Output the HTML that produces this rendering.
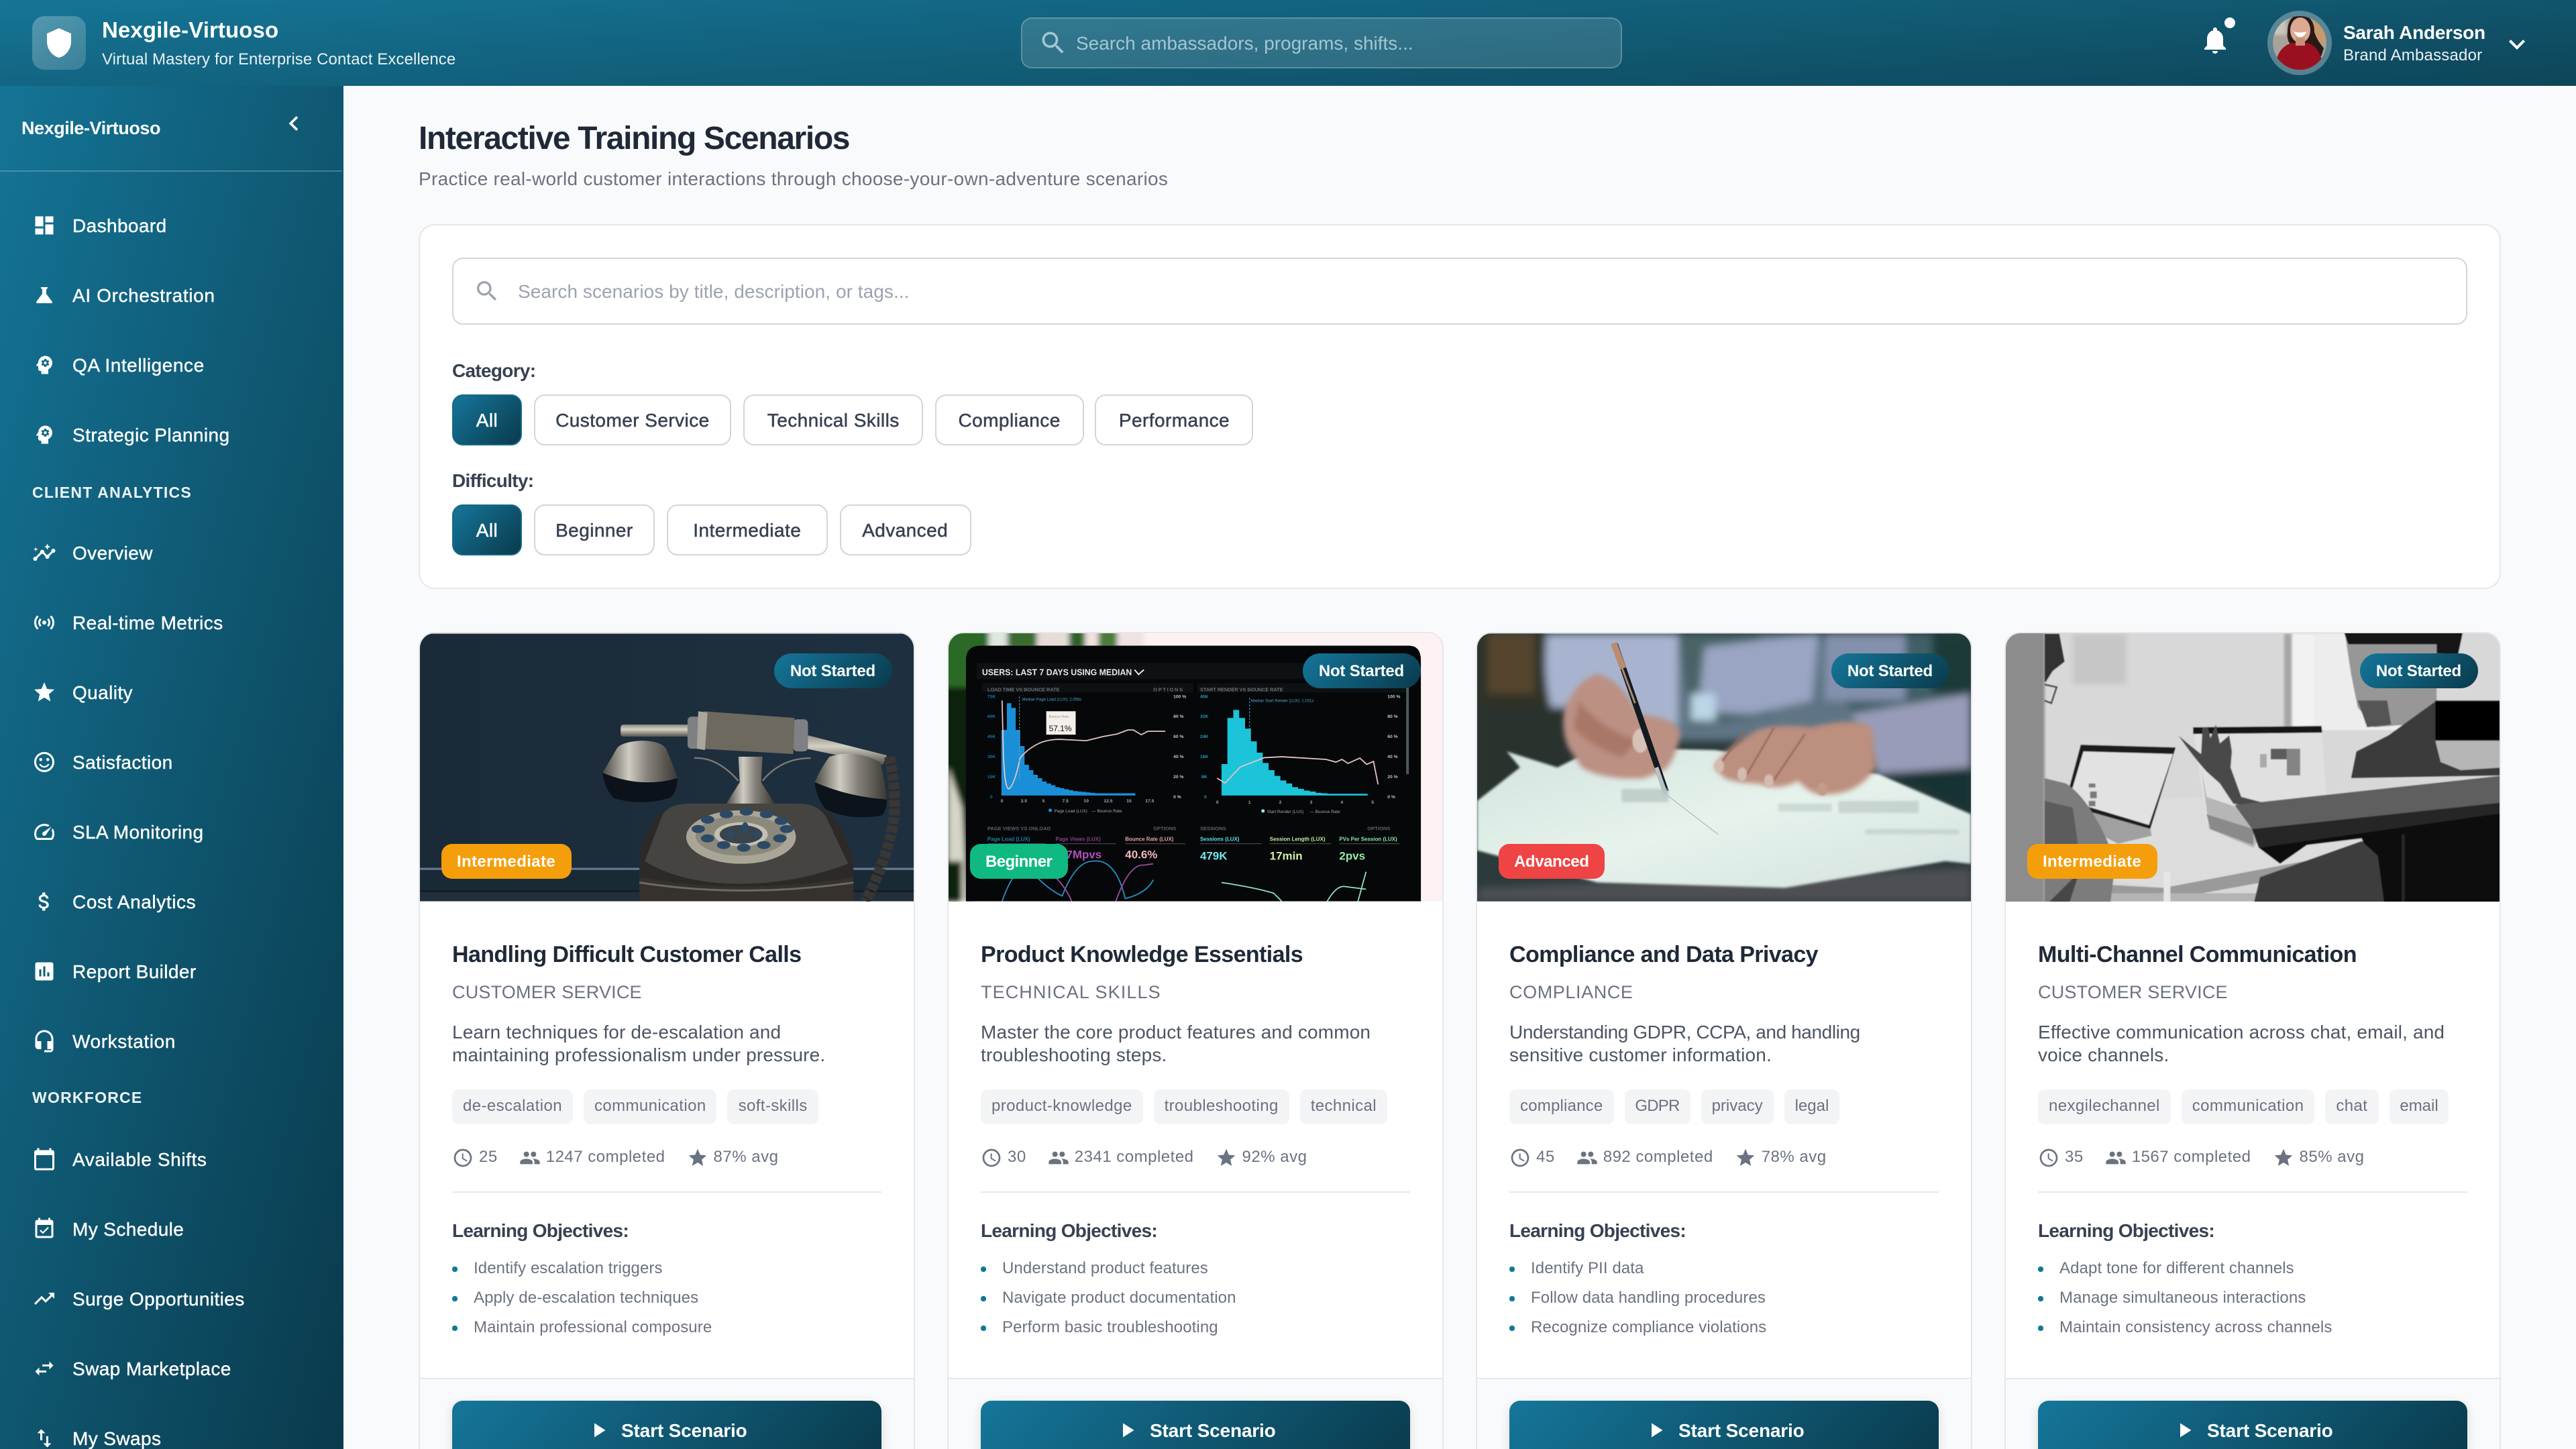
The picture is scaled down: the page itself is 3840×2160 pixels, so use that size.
<!DOCTYPE html>
<html lang="en">
<head>
<meta charset="utf-8">
<title>Interactive Training Scenarios</title>
<style>
*{box-sizing:border-box;margin:0;padding:0}
html,body{width:3840px;height:2160px;overflow:hidden;background:#f9fafb}
body{font-family:"Liberation Sans",Arial,sans-serif}
#app{position:absolute;left:0;top:0;width:1920px;height:1080px;transform:scale(2);transform-origin:0 0;overflow:hidden;background:#f9fafb}
.abs{position:absolute}
svg{display:block}
header{position:absolute;left:0;top:0;width:1920px;height:64px;background:linear-gradient(176deg,#157596 0%,#0e4558 100%);color:#fff;z-index:5}
.logo{position:absolute;left:24px;top:12px;width:40px;height:40px;border-radius:9px;background:linear-gradient(135deg,rgba(255,255,255,.27),rgba(255,255,255,.16));display:flex;align-items:center;justify-content:center}
.brand{position:absolute;left:76px;top:12px;font-size:16.5px;font-weight:700;line-height:22px;white-space:nowrap;letter-spacing:.05px}
.tag-line{position:absolute;left:76px;top:36px;font-size:12px;line-height:16px;white-space:nowrap;color:#e8f1f4;letter-spacing:.05px}
.hsearch{position:absolute;left:761px;top:13px;width:448px;height:38px;border-radius:8px;background:rgba(255,255,255,.13);border:1px solid rgba(255,255,255,.22)}
.hsearch span{position:absolute;left:40px;top:9.5px;font-size:14px;line-height:17px;color:#a3c6d2;white-space:nowrap}
.hsearch svg{position:absolute;left:12px;top:7px}
.dot{position:absolute;left:1658px;top:13px;width:8px;height:8px;border-radius:50%;background:#fff}
.avatar{position:absolute;left:1694px;top:12px;width:40px;height:40px;border-radius:50%;overflow:hidden;box-shadow:0 0 0 4px rgba(255,255,255,.3)}
.uname{position:absolute;left:1746.5px;top:15px;font-size:14px;font-weight:700;line-height:18px;white-space:nowrap;letter-spacing:-.12px}
.urole{position:absolute;left:1746.5px;top:33px;font-size:12px;line-height:16px;white-space:nowrap;color:#e8f1f4;letter-spacing:.1px}
aside{position:absolute;left:0;top:64px;width:256px;height:1016px;background:linear-gradient(105deg,#147496 0%,#0a3a4c 100%);color:#fff;overflow:hidden}
.sname{position:absolute;left:16px;top:23px;font-size:13.5px;font-weight:700;line-height:18px;white-space:nowrap;letter-spacing:-.22px}
.sdiv{position:absolute;left:0;top:63px;width:255px;height:1px;background:rgba(255,255,255,.22)}
.nav{position:absolute;left:0;width:256px;height:40px;display:block}
.nav svg{position:absolute;left:24px;top:11px}
.nav span{position:absolute;left:54px;top:11px;font-size:14px;line-height:18px;letter-spacing:.2px;white-space:nowrap;-webkit-text-stroke:.2px #fff;color:#fff}
.shead{position:absolute;left:24px;font-size:11.5px;font-weight:700;letter-spacing:.62px;line-height:16px;white-space:nowrap;color:#eef5f7}
h1{position:absolute;left:312px;top:88.5px;font-size:24px;line-height:30px;font-weight:700;color:#1f2937;letter-spacing:-.68px;white-space:nowrap}
.sub{position:absolute;left:312px;top:124px;font-size:14px;line-height:18px;color:#6b7280;white-space:nowrap;letter-spacing:.145px}
.panel{position:absolute;left:312px;top:167px;width:1552px;height:272px;background:#fff;border:1px solid #e5e7eb;border-radius:12px}
.finput{position:absolute;left:24px;top:23.5px;width:1502px;height:50px;border:1px solid #d1d5db;border-radius:8px;background:#fff}
.finput svg{position:absolute;left:15px;top:14px}
.finput span{position:absolute;left:48px;top:15px;font-size:14px;line-height:18px;color:#9ca3af;white-space:nowrap;letter-spacing:.03px}
.flabel{position:absolute;left:24px;font-size:14px;font-weight:700;line-height:18px;color:#374151;letter-spacing:-.35px}
.frow{position:absolute;left:24px;display:flex;gap:8.7px}
.fb{height:38px;border:1px solid #d1d5db;border-radius:8px;background:#fff;font-size:14px;color:#374151;display:flex;align-items:center;justify-content:center;white-space:nowrap;-webkit-text-stroke:.25px #374151;letter-spacing:.22px}
.fb.on{background:linear-gradient(135deg,#15769a,#0a3a4c);border-color:#15698a;color:#fff;-webkit-text-stroke:.25px #fff}
.card{position:absolute;top:471px;width:369.5px;height:640px;background:#fff;border:1px solid #e5e7eb;border-radius:12px;overflow:hidden}
.img{position:absolute;left:0;top:0;width:368px;height:200px;overflow:hidden}
.st{position:absolute;right:16px;top:15px;height:26px;padding:0 12px;border-radius:13px;background:linear-gradient(135deg,#15769a,#0a3a4c);color:#fff;font-size:12px;font-weight:700;line-height:26px;letter-spacing:-.1px;white-space:nowrap}
.df{position:absolute;left:15.5px;top:157px;height:26px;padding:0 12px;border-radius:8px;color:#fff;font-size:12px;font-weight:700;line-height:26px;white-space:nowrap}
.int{background:#f59e0b;letter-spacing:.18px}.beg{background:#10b981;letter-spacing:-.3px}.adv{background:#ef4444;letter-spacing:-.2px}
.t{position:absolute;left:24px;top:228px;font-size:17px;font-weight:700;line-height:24px;color:#1f2937;letter-spacing:-.3px;white-space:nowrap}
.c{position:absolute;left:24px;top:258.7px;font-size:13.5px;line-height:18px;color:#6b7280;letter-spacing:.1px;white-space:nowrap}
.d{position:absolute;left:24px;top:288.5px;width:322px;font-size:14px;line-height:17px;color:#4b5563;letter-spacing:.08px;white-space:nowrap}
.tags{position:absolute;left:24px;top:340px;display:flex;gap:8px}
.tags span{height:26px;padding:0 8px;border-radius:5px;background:#f3f4f6;color:#6b7280;font-size:12px;line-height:25px;letter-spacing:.2px;white-space:nowrap}
.meta{position:absolute;left:24px;top:383px;height:16px;display:flex;gap:16px;font-size:12px;line-height:14px;color:#6b7280;white-space:nowrap;letter-spacing:.25px}
.meta div{display:flex;gap:4px;height:16px}
.hr{position:absolute;left:24px;top:416px;width:320px;height:1px;background:#e5e7eb}
.h{position:absolute;left:24px;top:436px;font-size:14px;font-weight:700;line-height:18px;color:#374151;letter-spacing:-.35px;white-space:nowrap}
.obj{position:absolute;left:24px;top:462px;list-style:none}
.obj li{position:relative;height:22px;line-height:22px;padding-left:16px;font-size:12px;color:#6b7280;white-space:nowrap;letter-spacing:.05px}
.obj li::before{content:"";position:absolute;left:0;top:10px;width:3.5px;height:3.5px;border-radius:50%;background:#15769a}
.foot{position:absolute;left:0;top:555px;width:368px;height:90px;background:#f9fafb;border-top:1px solid #e5e7eb}
.btn{position:absolute;left:24px;top:15.5px;width:320px;height:44px;border-radius:8px;background:linear-gradient(135deg,#15769a,#0a3a4c);box-shadow:0 2px 8px rgba(0,0,0,.12);color:#fff}
.btn svg{position:absolute;left:99.5px;top:13px}
.btn span{position:absolute;left:126px;top:13px;font-size:14px;font-weight:700;line-height:18px;white-space:nowrap;letter-spacing:-.08px}
</style>
</head>
<body>
<svg width="0" height="0" style="position:absolute">
<symbol id="i-dash" viewBox="0 0 24 24"><path d="M3 13h8V3H3v10zm0 8h8v-6H3v6zm10 0h8V11h-8v10zm0-18v6h8V3h-8z"/></symbol>
<symbol id="i-flask" viewBox="0 0 24 24"><path d="M19.8 18.4L14 10.67V6.5l1.35-1.69c.26-.33.03-.81-.39-.81H9.04c-.42 0-.65.48-.39.81L10 6.5v4.17L4.2 18.4c-.49.66-.02 1.6.8 1.6h14c.82 0 1.29-.94.8-1.6z"/></symbol>
<symbol id="i-psy" viewBox="0 0 24 24"><path d="M13 8.57c-.79 0-1.43.64-1.43 1.43s.64 1.43 1.43 1.43 1.43-.64 1.43-1.43-.64-1.43-1.43-1.43z"/><path d="M13 3C9.25 3 6.2 5.94 6.02 9.64L4.1 12.2c-.25.33 0 .8.4.8H6v3c0 1.1.9 2 2 2h1v3h7v-4.68c2.36-1.12 4-3.53 4-6.32 0-3.87-3.13-7-7-7zm3 7c0 .13-.01.26-.03.38l.83.66c.08.06.1.16.05.25l-.8 1.39c-.05.09-.16.12-.24.09l-.99-.4c-.21.16-.43.29-.67.39L14 13.83c-.01.1-.1.17-.2.17h-1.6c-.1 0-.18-.07-.2-.17l-.15-1.06c-.25-.1-.47-.23-.68-.39l-.99.4c-.09.03-.2 0-.25-.09l-.8-1.39c-.05-.08-.03-.19.05-.25l.84-.66c-.02-.12-.03-.25-.03-.37 0-.13.02-.26.04-.38l-.85-.66c-.08-.06-.1-.16-.05-.26l.8-1.38c.05-.09.15-.12.24-.09l1 .4c.2-.15.43-.29.67-.39L12 6.17c.02-.1.1-.17.2-.17h1.6c.1 0 .18.07.2.17l.15 1.06c.24.1.46.23.67.39l1-.4c.09-.03.2 0 .24.09l.8 1.38c.05.09.03.2-.05.26l-.85.66c.03.12.04.25.04.37z"/></symbol>
<symbol id="i-insights" viewBox="0 0 24 24"><path d="M21 8c-1.45 0-2.26 1.44-1.93 2.51l-3.55 3.56c-.3-.09-.74-.09-1.04 0l-2.55-2.55C12.27 10.45 11.46 9 10 9c-1.45 0-2.27 1.44-1.93 2.52l-4.56 4.55C2.44 15.74 1 16.55 1 18c0 1.1.9 2 2 2 1.45 0 2.26-1.44 1.93-2.51l4.55-4.56c.3.09.74.09 1.04 0l2.55 2.55C12.73 16.55 13.54 18 15 18c1.45 0 2.27-1.44 1.93-2.52l3.56-3.55c1.07.33 2.51-.48 2.51-1.93 0-1.1-.9-2-2-2z"/><path d="M15 9l.94-2.07L18 6l-2.06-.93L15 3l-.92 2.07L12 6l2.08.93z"/><path d="M3.5 11L4 9l2-.5L4 8l-.5-2L3 8l-2 .5L3 9z"/></symbol>
<symbol id="i-sens" viewBox="0 0 24 24"><path d="M7.76 16.24C6.67 15.16 6 13.66 6 12s.67-3.16 1.76-4.24l1.42 1.42C8.45 9.9 8 10.9 8 12c0 1.1.45 2.1 1.17 2.83l-1.41 1.41zm8.48 0C17.33 15.16 18 13.66 18 12s-.67-3.16-1.76-4.24l-1.42 1.42C15.55 9.9 16 10.9 16 12c0 1.1-.45 2.1-1.17 2.83l1.41 1.41zM12 10c-1.1 0-2 .9-2 2s.9 2 2 2 2-.9 2-2-.9-2-2-2zm8 2c0 2.21-.9 4.21-2.35 5.65l1.42 1.42C20.88 17.26 22 14.76 22 12s-1.12-5.26-2.93-7.07l-1.42 1.42C19.1 7.79 20 9.79 20 12zM6.35 6.35 4.93 4.93C3.12 6.74 2 9.24 2 12s1.12 5.26 2.93 7.07l1.42-1.42C4.9 16.21 4 14.21 4 12s.9-4.21 2.35-5.65z"/></symbol>
<symbol id="i-star" viewBox="0 0 24 24"><path d="M12 17.27 18.18 21l-1.64-7.03L22 9.24l-7.19-.61L12 2 9.19 8.63 2 9.24l5.46 4.73L5.82 21z"/></symbol>
<symbol id="i-smile" viewBox="0 0 24 24"><circle cx="15.5" cy="9.5" r="1.5"/><circle cx="8.5" cy="9.5" r="1.5"/><path d="M12 2C6.47 2 2 6.5 2 12s4.47 10 10 10 10-4.5 10-10S17.53 2 12 2zm0 18c-4.41 0-8-3.59-8-8s3.59-8 8-8 8 3.59 8 8-3.59 8-8 8zm0-4c-1.48 0-2.75-.81-3.45-2H6.88c.8 2.05 2.79 3.5 5.12 3.5s4.32-1.45 5.12-3.5h-1.67c-.69 1.19-1.97 2-3.45 2z"/></symbol>
<symbol id="i-speed" viewBox="0 0 24 24"><path d="M20.38 8.57l-1.23 1.85a8 8 0 0 1-.22 7.58H5.07A8 8 0 0 1 15.58 6.85l1.85-1.23A10 10 0 0 0 3.35 19a2 2 0 0 0 1.72 1h13.85a2 2 0 0 0 1.74-1 10 10 0 0 0-.27-10.44z"/><path d="M10.59 15.41a2 2 0 0 0 2.83 0l5.66-8.49-8.49 5.66a2 2 0 0 0 0 2.83z"/></symbol>
<symbol id="i-money" viewBox="0 0 24 24"><path d="M11.8 10.9c-2.27-.59-3-1.2-3-2.15 0-1.09 1.01-1.85 2.7-1.85 1.78 0 2.44.85 2.5 2.1h2.21c-.07-1.72-1.12-3.3-3.21-3.81V3h-3v2.16c-1.94.42-3.5 1.68-3.5 3.61 0 2.31 1.91 3.46 4.7 4.13 2.5.6 3 1.48 3 2.41 0 .69-.49 1.79-2.7 1.79-2.06 0-2.87-.92-2.98-2.1h-2.2c.12 2.19 1.76 3.42 3.68 3.83V21h3v-2.15c1.95-.37 3.5-1.5 3.5-3.55 0-2.84-2.43-3.81-4.7-4.4z"/></symbol>
<symbol id="i-assess" viewBox="0 0 24 24"><path d="M19 3H5c-1.1 0-2 .9-2 2v14c0 1.1.9 2 2 2h14c1.1 0 2-.9 2-2V5c0-1.1-.9-2-2-2zM9 17H7v-7h2v7zm4 0h-2V7h2v10zm4 0h-2v-4h2v4z"/></symbol>
<symbol id="i-head" viewBox="0 0 24 24"><path d="M12 1c-4.97 0-9 4.03-9 9v7c0 1.66 1.34 3 3 3h3v-8H5v-2c0-3.87 3.13-7 7-7s7 3.13 7 7v2h-4v8h4v1h-7v2h6c1.66 0 3-1.34 3-3V10c0-4.97-4.03-9-9-9z"/></symbol>
<symbol id="i-cal" viewBox="0 0 24 24"><path d="M20 3h-1V1h-2v2H7V1H5v2H4c-1.1 0-2 .9-2 2v16c0 1.1.9 2 2 2h16c1.1 0 2-.9 2-2V5c0-1.1-.9-2-2-2zm0 18H4V8h16v13z"/></symbol>
<symbol id="i-ev" viewBox="0 0 24 24"><path d="M16.53 11.06L15.47 10l-4.88 4.88-2.12-2.12-1.06 1.06L10.59 17l5.94-5.94zM19 3h-1V1h-2v2H8V1H6v2H5c-1.11 0-1.99.9-1.99 2L3 19c0 1.1.89 2 2 2h14c1.1 0 2-.9 2-2V5c0-1.1-.9-2-2-2zm0 16H5V8h14v11z"/></symbol>
<symbol id="i-trend" viewBox="0 0 24 24"><path d="M16 6l2.29 2.29-4.88 4.88-4-4L2 16.59 3.41 18l6-6 4 4 6.3-6.29L22 12V6z"/></symbol>
<symbol id="i-swaph" viewBox="0 0 24 24"><path d="M6.99 11L3 15l3.99 4v-3H14v-2H6.99v-3zM21 9l-3.99-4v3H10v2h7.01v3L21 9z"/></symbol>
<symbol id="i-swapv" viewBox="0 0 24 24"><path d="M16 17.01V10h-2v7.01h-3L15 21l4-3.99h-3zM9 3L5 6.99h3V14h2V6.99h3L9 3z"/></symbol>
<symbol id="i-search" viewBox="0 0 24 24"><path d="M15.5 14h-.79l-.28-.27A6.471 6.471 0 0 0 16 9.5 6.5 6.5 0 1 0 9.5 16c1.61 0 3.09-.59 4.23-1.57l.27.28v.79l5 4.99L20.49 19l-4.99-5zm-6 0C7.01 14 5 11.99 5 9.5S7.01 5 9.5 5 14 7.01 14 9.5 11.99 14 9.5 14z"/></symbol>
<symbol id="i-clock" viewBox="0 0 24 24"><path d="M11.99 2C6.47 2 2 6.48 2 12s4.47 10 9.99 10C17.52 22 22 17.52 22 12S17.52 2 11.99 2zM12 20c-4.42 0-8-3.58-8-8s3.58-8 8-8 8 3.58 8 8-3.58 8-8 8z"/><path d="M12.5 7H11v6l5.25 3.15.75-1.23-4.5-2.67z"/></symbol>
<symbol id="i-people" viewBox="0 0 24 24"><path d="M16 11c1.66 0 2.99-1.34 2.99-3S17.66 5 16 5c-1.66 0-3 1.34-3 3s1.34 3 3 3zm-8 0c1.66 0 2.99-1.34 2.99-3S9.66 5 8 5C6.34 5 5 6.34 5 8s1.34 3 3 3zm0 2c-2.33 0-7 1.17-7 3.5V19h14v-2.5c0-2.33-4.67-3.5-7-3.5zm8 0c-.29 0-.62.02-.97.05 1.16.84 1.97 1.97 1.97 3.45V19h6v-2.5c0-2.33-4.67-3.5-7-3.5z"/></symbol>
<symbol id="i-play" viewBox="0 0 24 24"><path d="M8 5v14l11-7z"/></symbol>
<linearGradient id="silver" x1="0" y1="0" x2="1" y2="0"><stop offset="0" stop-color="#4a4842"/><stop offset=".35" stop-color="#cfccc2"/><stop offset=".6" stop-color="#85817a"/><stop offset="1" stop-color="#3a3833"/></linearGradient>
<linearGradient id="silverv" x1="0" y1="0" x2="0" y2="1"><stop offset="0" stop-color="#8f8b80"/><stop offset=".4" stop-color="#d2cfc5"/><stop offset="1" stop-color="#55524b"/></linearGradient>
<linearGradient id="wall" x1="0" y1="0" x2="1" y2="0"><stop offset="0" stop-color="#1b2a37"/><stop offset="1" stop-color="#1e3040"/></linearGradient>
<linearGradient id="paper" x1="0" y1="0" x2="1" y2="1"><stop offset="0" stop-color="#d3e2de"/><stop offset=".5" stop-color="#e6f3ec"/><stop offset="1" stop-color="#d3e0de"/></linearGradient>
<filter id="b03" x="-5%" y="-5%" width="110%" height="110%"><feGaussianBlur stdDeviation=".35"/></filter>
<filter id="b05" x="-20%" y="-20%" width="140%" height="140%"><feGaussianBlur stdDeviation=".5"/></filter>
<filter id="b1" x="-20%" y="-20%" width="140%" height="140%"><feGaussianBlur stdDeviation="1"/></filter>
<filter id="b2" x="-20%" y="-20%" width="140%" height="140%"><feGaussianBlur stdDeviation="2"/></filter>
<filter id="b3" x="-20%" y="-20%" width="140%" height="140%"><feGaussianBlur stdDeviation="3"/></filter>
</svg>
<div id="app">
<header>
  <div class="logo"><svg width="24" height="24" viewBox="0 0 24 24" fill="#fff"><path d="M12 1L3 5v6c0 5.55 3.84 10.74 9 12 5.16-1.26 9-6.45 9-12V5l-9-4z"/></svg></div>
  <div class="brand">Nexgile-Virtuoso</div>
  <div class="tag-line">Virtual Mastery for Enterprise Contact Excellence</div>
  <div class="hsearch"><svg width="22" height="22" fill="#a3c6d2"><use href="#i-search"/></svg><span>Search ambassadors, programs, shifts...</span></div>
  <svg class="abs" style="left:1638.5px;top:18px" width="24" height="24" viewBox="0 0 24 24" fill="#fff"><path d="M12 22c1.1 0 2-.9 2-2h-4c0 1.1.89 2 2 2zm6-6v-5c0-3.07-1.64-5.64-4.5-6.32V4c0-.83-.67-1.5-1.5-1.5s-1.5.67-1.5 1.5v.68C7.63 5.36 6 7.92 6 11v5l-2 2v1h16v-1l-2-2z"/></svg>
  <div class="dot"></div>
  <div class="avatar"><svg width="40" height="40" viewBox="0 0 40 40">
    <rect width="40" height="40" fill="#a8a29b"/>
    <rect x="28" width="12" height="20" fill="#c79a6c" filter="url(#b1)"/>
    <rect width="10" height="14" fill="#c9c4bc" filter="url(#b1)"/>
    <path d="M11 12 Q11 -1 21 -1 Q31 0 31 12 Q33 18 38 24 L36 30 L24 24 L14 22 Q10 18 11 12Z" fill="#2a1a17"/>
    <path d="M2 40 Q2 24 14 20 L26 20 Q36 23 38 40Z" fill="#9a1020"/>
    <ellipse cx="20.5" cy="10.5" rx="7.5" ry="9.5" fill="#dcaa92"/>
    <rect x="17" y="16" width="7" height="6" fill="#c99079"/>
    <path d="M15.5 11.5 Q20.5 20 25.5 11.5 Q20.5 13 15.5 11.5Z" fill="#fff"/>
  </svg></div>
  <div class="uname">Sarah Anderson</div>
  <div class="urole">Brand Ambassador</div>
  <svg class="abs" style="left:1864px;top:20.5px" width="24" height="24" viewBox="0 0 24 24" fill="#fff"><path d="M16.59 8.59 12 13.17 7.41 8.59 6 10l6 6 6-6z"/></svg>
</header>
<aside>
  <div class="sname">Nexgile-Virtuoso</div>
  <svg class="abs" style="left:208px;top:17px" width="22" height="22" viewBox="0 0 24 24" fill="#fff"><path d="M15.41 7.41 14 6l-6 6 6 6 1.41-1.41L10.83 12z"/></svg>
  <div class="sdiv"></div>
  <div class="nav" style="top:84px"><svg width="18" height="18" fill="#fff"><use href="#i-dash"/></svg><span>Dashboard</span></div>
  <div class="nav" style="top:136px"><svg width="18" height="18" fill="#fff"><use href="#i-flask"/></svg><span style="letter-spacing:.32px">AI Orchestration</span></div>
  <div class="nav" style="top:188px"><svg width="18" height="18" fill="#fff"><use href="#i-psy"/></svg><span style="letter-spacing:.28px">QA Intelligence</span></div>
  <div class="nav" style="top:240px"><svg width="18" height="18" fill="#fff"><use href="#i-psy"/></svg><span>Strategic Planning</span></div>
  <div class="shead" style="top:295.5px">CLIENT ANALYTICS</div>
  <div class="nav" style="top:328px"><svg width="18" height="18" fill="#fff"><use href="#i-insights"/></svg><span>Overview</span></div>
  <div class="nav" style="top:380px"><svg width="18" height="18" fill="#fff"><use href="#i-sens"/></svg><span>Real-time Metrics</span></div>
  <div class="nav" style="top:432px"><svg width="18" height="18" fill="#fff"><use href="#i-star"/></svg><span>Quality</span></div>
  <div class="nav" style="top:484px"><svg width="18" height="18" fill="#fff"><use href="#i-smile"/></svg><span>Satisfaction</span></div>
  <div class="nav" style="top:536px"><svg width="18" height="18" fill="#fff"><use href="#i-speed"/></svg><span>SLA Monitoring</span></div>
  <div class="nav" style="top:588px"><svg width="18" height="18" fill="#fff"><use href="#i-money"/></svg><span style="letter-spacing:.3px">Cost Analytics</span></div>
  <div class="nav" style="top:640px"><svg width="18" height="18" fill="#fff"><use href="#i-assess"/></svg><span>Report Builder</span></div>
  <div class="nav" style="top:692px"><svg width="18" height="18" fill="#fff"><use href="#i-head"/></svg><span style="letter-spacing:.3px">Workstation</span></div>
  <div class="shead" style="top:747px">WORKFORCE</div>
  <div class="nav" style="top:780px"><svg width="18" height="18" fill="#fff"><use href="#i-cal"/></svg><span style="letter-spacing:.3px">Available Shifts</span></div>
  <div class="nav" style="top:832px"><svg width="18" height="18" fill="#fff"><use href="#i-ev"/></svg><span>My Schedule</span></div>
  <div class="nav" style="top:884px"><svg width="18" height="18" fill="#fff"><use href="#i-trend"/></svg><span>Surge Opportunities</span></div>
  <div class="nav" style="top:936px"><svg width="18" height="18" fill="#fff"><use href="#i-swaph"/></svg><span>Swap Marketplace</span></div>
  <div class="nav" style="top:988px"><svg width="18" height="18" fill="#fff"><use href="#i-swapv"/></svg><span>My Swaps</span></div>
</aside>

<h1>Interactive Training Scenarios</h1>
<div class="sub">Practice real-world customer interactions through choose-your-own-adventure scenarios</div>

<section class="panel">
  <div class="finput"><svg width="20" height="20" fill="#9ca3af"><use href="#i-search"/></svg><span>Search scenarios by title, description, or tags...</span></div>
  <div class="flabel" style="top:99px">Category:</div>
  <div class="frow" style="top:126px">
    <div class="fb on" style="width:52px">All</div><div class="fb" style="width:147.5px">Customer Service</div><div class="fb" style="width:134.5px">Technical Skills</div><div class="fb" style="width:110.5px">Compliance</div><div class="fb" style="width:118px">Performance</div>
  </div>
  <div class="flabel" style="top:181px">Difficulty:</div>
  <div class="frow" style="top:208px">
    <div class="fb on" style="width:52px">All</div><div class="fb" style="width:90.5px">Beginner</div><div class="fb" style="width:120px">Intermediate</div><div class="fb" style="width:98px">Advanced</div>
  </div>
</section>

<!-- CARD 1 -->
<article class="card" style="left:312px">
  <div class="img"><svg width="368" height="200" viewBox="0 0 369 200">
    <rect width="369" height="200" fill="url(#wall)"/>
    <rect y="175" width="369" height="1.6" fill="#64798d"/>
    <rect y="177" width="369" height="15" fill="#1a2936"/>
    <rect y="192" width="369" height="1.5" fill="#10181f"/>
    <rect y="193" width="369" height="7" fill="#222f3b"/>
    <path d="M164 200 L164 168 Q168 140 186 130 L300 130 Q318 142 324 170 L324 200Z" fill="#2b2a29"/>
    <path d="M181 136 Q185 128 200 127 L285 127 Q300 128 305 140 L320 172 Q280 187 240 187 Q195 187 168 170 Z" fill="#464440"/>
    <path d="M164 182 Q240 196 324 182 L324 200 L164 200Z" fill="#34312e"/>
    <path d="M164 186 Q240 198 324 186" stroke="#6e695f" stroke-width="1.5" fill="none"/>
    <ellipse cx="240" cy="152" rx="41" ry="20" fill="#a9a698"/>
    <ellipse cx="240" cy="151" rx="34" ry="15" fill="#8b887c"/>
    <ellipse cx="240" cy="150" rx="20" ry="9" fill="#c3c0b3"/>
    <ellipse cx="240" cy="150" rx="16" ry="7" fill="#3a434b"/>
    <g fill="#2d4966">
      <ellipse cx="208" cy="146" rx="5" ry="3"/><ellipse cx="215" cy="139" rx="5" ry="3"/><ellipse cx="229" cy="135" rx="5" ry="3"/><ellipse cx="244" cy="133" rx="5" ry="3"/><ellipse cx="259" cy="135" rx="5" ry="3"/><ellipse cx="270" cy="140" rx="5" ry="3"/><ellipse cx="274" cy="146" rx="5" ry="3"/><ellipse cx="269" cy="153" rx="5" ry="3"/><ellipse cx="257" cy="158" rx="5" ry="3"/><ellipse cx="242" cy="160" rx="5" ry="3"/><ellipse cx="227" cy="158" rx="5" ry="3"/><ellipse cx="215" cy="153" rx="5" ry="3"/>
      <ellipse cx="243" cy="145" rx="2.5" ry="4"/><ellipse cx="232" cy="150" rx="2.5" ry="3"/><ellipse cx="252" cy="150" rx="2.5" ry="3"/>
    </g>
    <path d="M238 92 L256 92 L255 111 L265 127 L229 127 L239 111Z" fill="url(#silver)"/>
    <path d="M205 93 Q222 92 238 110 M292 93 Q270 93 256 110" stroke="#7d7a72" stroke-width="1.2" fill="none"/>
    <rect x="150" y="68" width="56" height="9" rx="2" fill="url(#silverv)"/>
    <path d="M286 75 L349 91 L346 98 L284 85Z" fill="url(#silverv)"/>
    <path d="M147 86 Q150 81 165 80 Q180 80 184 86 Q190 100 192.6 108 Q165 116 136.5 104 Q142 95 147 86Z" fill="url(#silver)"/>
    <path d="M136.5 104 Q165 116 192.6 108 Q192 120 186 123 Q165 129 145 123 Q138 116 136.5 104Z" fill="#0b1219"/>
    <path d="M306 92 Q325 86 344 96 Q348 112 349 124 Q320 122 295 111 Q300 100 306 92Z" fill="url(#silver)"/>
    <path d="M295 111 Q320 122 349 124 Q349 132 345 136 Q320 140 303 131 Q296 122 295 111Z" fill="#0c131a"/>
    <rect x="200" y="62" width="10" height="24" rx="3" fill="#7f8083"/>
    <rect x="279" y="64" width="11" height="24" rx="3" fill="#7f8083"/>
    <path d="M212 58 L280 63 L279 90 L210 86Z" fill="#6d695f"/>
    <path d="M208 58 L215 59 L213 87 L207 86Z" fill="#aaa69b"/>
    <path d="M351 92 Q358 130 352 150 Q346 175 333 200" stroke="#3a3633" stroke-width="8" stroke-dasharray="5 1.5" fill="none"/>
  </svg></div>
  <div class="st">Not Started</div><div class="df int">Intermediate</div>
  <div class="t">Handling Difficult Customer Calls</div>
  <div class="c">CUSTOMER SERVICE</div>
  <div class="d">Learn techniques for de-escalation and<br>maintaining professionalism under pressure.</div>
  <div class="tags"><span>de-escalation</span><span>communication</span><span>soft-skills</span></div>
  <div class="meta"><div><svg width="16" height="16" fill="#6b7280"><use href="#i-clock"/></svg>25</div><div><svg width="16" height="16" fill="#6b7280"><use href="#i-people"/></svg>1247 completed</div><div><svg width="16" height="16" fill="#6b7280"><use href="#i-star"/></svg>87% avg</div></div>
  <div class="hr"></div>
  <div class="h">Learning Objectives:</div>
  <ul class="obj"><li>Identify escalation triggers</li><li>Apply de-escalation techniques</li><li>Maintain professional composure</li></ul>
  <div class="foot"><div class="btn"><svg width="18" height="18" fill="#fff"><use href="#i-play"/></svg><span>Start Scenario</span></div></div>
</article>

<!-- CARD 2 -->
<article class="card" style="left:706px">
  <div class="img"><svg width="368" height="200" viewBox="0 0 369 200" font-family="Liberation Sans, Arial, sans-serif">
    <rect width="369" height="200" fill="#fcf2f3"/>
    <g filter="url(#b2)">
      <rect x="-5" y="0" width="23" height="200" fill="#0e2410"/>
      <rect x="-5" y="-5" width="35" height="45" fill="#2a6a26"/>
      <rect x="30" y="-5" width="14" height="17" fill="#dfe7df"/>
      <rect x="44" y="-5" width="22" height="17" fill="#3a6b2e"/>
      <rect x="66" y="-5" width="24" height="17" fill="#e6dcd8"/>
      <rect x="90" y="-5" width="12" height="17" fill="#2d6328"/>
      <rect x="102" y="-5" width="44" height="17" fill="#f0e2e0"/>
      <rect x="112" y="-5" width="14" height="17" fill="#4c7a3a"/>
      <path d="M0 100 L10 130 L14 200 L0 200Z" fill="#d6d6c8"/>
      <rect x="0" y="170" width="10" height="30" fill="#11200f"/>
    </g>
    <path d="M13 20 Q13 9 24 9 L344 9 Q353 9 353 20 L353 200 L13 200Z" fill="#050709"/>
    <rect x="21" y="22" width="328" height="12" fill="#0d1114"/>
    <text x="25" y="31" font-size="6.6" font-weight="700" fill="#e8e8e8" textLength="112" lengthAdjust="spacingAndGlyphs">USERS: LAST 7 DAYS USING MEDIAN</text>
    <path d="M139 27 L142 30.5 L146 27" stroke="#e8e8e8" stroke-width="1" fill="none"/>
    <rect x="25" y="37" width="158" height="7" fill="#0e1113"/><rect x="186" y="37" width="156" height="7" fill="#0e1113"/>
    <g font-size="3.8" font-weight="700" fill="#6c7276"><text x="29" y="43" textLength="54">LOAD TIME VS BOUNCE RATE</text><text x="153" y="43" textLength="22">OPTIONS</text><text x="188" y="43" textLength="62">START RENDER VS BOUNCE RATE</text></g>
    <path fill="#1a8fd8" d="M39.5 121V72h4.1V52h3.3v3.5h3.3V72h3.3v12h3.3v14h3.3v4h3.3v3.5h3.3v2.5h3.3v2.5h3.3v1.5h3.3v1.3h3.3v1.4h3.3v.8h3.3v.8h3.3v.7h3.3v.7h3.3v.3h3.3v.3h3.3v.4h3.3v.3h3.3v.3h30V121Z"/>
    <path fill="#1bc4d8" d="M204 121V97.5h4.4V63h4.4v-6h4.4v6h4.4v8h4.4v9.5h4.4V89h4.4v7.7h4.4v5.3h4.4v4.3h4.4v3.4h4.4v2.3h4.4v2.7h4.4v1.3h4.4v1.3h4.4v.7h4.4v1h4.4v.3h4.4v.4h30V121Z"/>
    <path d="M40 50 L41 90 Q42 116 45 116 Q49 114 53.5 93 Q60 85 70 81 Q76 79 83 79 L103 80 L115 77 L126 75 L134 72 L138 72 L144 75.5 L149 73 L162 73" stroke="#e7c3c4" stroke-width=".9" fill="none"/>
    <path d="M200.7 108 L206.7 111.7 L218 99.7 L236 92.7 L249 92 L282 94 L289.5 96 L294 94 L298.5 97 L307.4 93 L312.5 97.7 L317.6 95.5 L321 112.7" stroke="#e7c3c4" stroke-width=".9" fill="none"/>
    <path d="M53 47V110M225 48V78" stroke="#5aa8cf" stroke-width=".5" stroke-dasharray="1.5 1" fill="none"/>
    <text x="55" y="50" font-size="3" fill="#4ba3cf">Median Page Load (LUX): 2.056s</text>
    <text x="226" y="51" font-size="3" fill="#4ba3cf">Median Start Render (LUX): 1.031s</text>
    <rect x="73" y="58" width="22" height="17.5" fill="#f4efe9"/>
    <text x="75" y="73" font-size="6" fill="#111">57.1%</text>
    <text x="75" y="63" font-size="2.6" fill="#999">Bounce Rate</text>
    <g font-size="3.4" font-weight="700" fill="#1777a8"><text x="29" y="48">75K</text><text x="29" y="63">60K</text><text x="29" y="78">45K</text><text x="29" y="93">30K</text><text x="29" y="108">15K</text><text x="31" y="123">0</text></g>
    <g font-size="3.4" font-weight="700" fill="#1aa1b2"><text x="188" y="48">40K</text><text x="188" y="63">32K</text><text x="188" y="78">24K</text><text x="188" y="93">16K</text><text x="189" y="108">8K</text><text x="191" y="123">0</text></g>
    <g font-size="3.4" font-weight="700" fill="#c4c4c4"><text x="168" y="48">100 %</text><text x="168" y="63">80 %</text><text x="168" y="78">60 %</text><text x="168" y="93">40 %</text><text x="168" y="108">20 %</text><text x="168" y="123">0 %</text><text x="328" y="48">100 %</text><text x="328" y="63">80 %</text><text x="328" y="78">60 %</text><text x="328" y="93">40 %</text><text x="328" y="108">20 %</text><text x="328" y="123">0 %</text></g>
    <g font-size="3.4" font-weight="700" fill="#aaa"><text x="39" y="126">0</text><text x="54" y="126">2.5</text><text x="70" y="126">5</text><text x="85" y="126">7.5</text><text x="101" y="126">10</text><text x="116" y="126">12.5</text><text x="133" y="126">15</text><text x="147" y="126">17.5</text><text x="200" y="127">0</text><text x="224" y="127">1</text><text x="247" y="127">2</text><text x="270" y="127">3</text><text x="293" y="127">4</text><text x="316" y="127">5</text></g>
    <g font-size="3.2" fill="#a8a8a8"><circle cx="76" cy="132" r="1.3" fill="#1a8fd8"/><text x="79" y="133.5">Page Load (LUX)</text><text x="107" y="133.5">— Bounce Rate</text><circle cx="235" cy="132.5" r="1.3" fill="#8fe6f5"/><text x="238" y="134">Start Render (LUX)</text><text x="270" y="134">— Bounce Rate</text></g>
    <g font-size="3.8" font-weight="700" fill="#5f6569"><text x="29" y="147">PAGE VIEWS VS ONLOAD</text><text x="153" y="147">OPTIONS</text><text x="188" y="147">SESSIONS</text><text x="313" y="147">OPTIONS</text></g>
    <g font-size="4" font-weight="700"><text x="29" y="155" fill="#1f7fb0">Page Load (LUX)</text><text x="80" y="155" fill="#8d3f8e">Page Views (LUX)</text><text x="132" y="155" fill="#e6a4a8">Bounce Rate (LUX)</text><text x="188" y="155" fill="#5fe0ea">Sessions (LUX)</text><text x="240" y="155" fill="#c6ee9a">Session Length (LUX)</text><text x="292" y="155" fill="#88e8a8">PVs Per Session (LUX)</text></g>
    <path d="M29 157H73M80 157H125M132 157H177M188 157H234M240 157H286M292 157H337" stroke="#555" stroke-width=".5"/>
    <g font-size="8.5" font-weight="700"><text x="88" y="168" fill="#b150bb">7Mpvs</text><text x="132" y="168" fill="#f2b8bb">40.6%</text><text x="188" y="169" fill="#74e6ee">479K</text><text x="240" y="169" fill="#d2f0a4">17min</text><text x="292" y="169" fill="#93ecac">2pvs</text></g>
    <path d="M40 200 Q50 172 60 176 Q75 192 85 196 Q95 170 108 170 Q125 168 132 198 Q148 194 153 184" stroke="#2b8fc0" stroke-width=".9" fill="none"/>
    <path d="M78 180 Q88 190 92 200 M125 200 Q135 172 146 173 L153 172" stroke="#a04c9c" stroke-width=".9" fill="none"/>
    <path d="M204 186 Q230 190 243 194 L249 200 M283 200 Q290 188 296 189 L312 191 M306 200 L312 178" stroke="#8fe4c0" stroke-width=".9" fill="none"/>
    <rect x="342" y="40" width="2" height="65" fill="#4d5a5a"/>
  </svg></div>
  <div class="st">Not Started</div><div class="df beg">Beginner</div>
  <div class="t">Product Knowledge Essentials</div>
  <div class="c" style="letter-spacing:.55px">TECHNICAL SKILLS</div>
  <div class="d">Master the core product features and common<br>troubleshooting steps.</div>
  <div class="tags"><span>product-knowledge</span><span>troubleshooting</span><span>technical</span></div>
  <div class="meta"><div><svg width="16" height="16" fill="#6b7280"><use href="#i-clock"/></svg>30</div><div><svg width="16" height="16" fill="#6b7280"><use href="#i-people"/></svg>2341 completed</div><div><svg width="16" height="16" fill="#6b7280"><use href="#i-star"/></svg>92% avg</div></div>
  <div class="hr"></div>
  <div class="h">Learning Objectives:</div>
  <ul class="obj"><li>Understand product features</li><li>Navigate product documentation</li><li>Perform basic troubleshooting</li></ul>
  <div class="foot"><div class="btn"><svg width="18" height="18" fill="#fff"><use href="#i-play"/></svg><span>Start Scenario</span></div></div>
</article>

<!-- CARD 3 -->
<article class="card" style="left:1100px">
  <div class="img"><svg width="368" height="200" viewBox="0 0 369 200">
    <rect width="369" height="200" fill="#2c3a3c"/>
    <g filter="url(#b3)">
      <rect x="0" y="0" width="60" height="60" fill="#2e3128"/>
      <rect x="8" y="0" width="35" height="45" fill="#54442f"/>
      <rect x="60" y="0" width="300" height="80" fill="#5f7585"/>
      <path d="M52 0 L150 0 L150 70 L100 66 L60 70 Q48 40 52 0Z" fill="#a8b4cf"/>
      <path d="M150 0 L210 0 L220 60 L160 70Z" fill="#4a6468"/>
      <path d="M170 10 L255 0 L250 50 L205 60 L165 58Z" fill="#99a5c2"/>
      <rect x="160" y="45" width="18" height="20" fill="#bcd6e6"/>
      <path d="M255 0 L369 0 L369 50 L280 60Z" fill="#3f5f66"/>
      <rect x="260" y="0" width="60" height="50" fill="#8491ad"/>
      <rect x="340" y="0" width="29" height="45" fill="#1f3a38"/>
      <path d="M280 60 L369 45 L369 105 L300 108Z" fill="#989cb8"/>
      <path d="M0 55 L70 55 L70 105 L0 125Z" fill="#2b302f"/>
      <path d="M295 105 L369 100 L369 135 L330 115Z" fill="#193230"/>
      <path d="M0 190 L369 175 L369 200 L0 200Z" fill="#4e4f52"/>
    </g>
    <path d="M0 125 L32 100 L22 88 L60 100 L90 85 L178 87 L300 105 L369 135 L369 172 L350 170 L230 190 L90 186 L0 162Z" fill="url(#paper)" filter="url(#b1)"/>
    <g filter="url(#b2)">
      <path d="M68 85 Q62 70 66 55 Q74 35 90 30 Q108 35 120 60 L132 62 Q150 65 152 75 Q148 95 140 102 L125 108 Q95 110 78 100Z" fill="#bc9083"/>
      <path d="M76 50 Q90 70 120 80 L108 92 Q85 85 72 70Z" fill="#a97768"/>
      <path d="M177 100 Q185 85 210 72 Q225 67 250 70 Q280 62 295 70 L298 100 Q285 120 262 120 Q250 122 240 110 Q225 118 210 112 Q195 112 185 108Z" fill="#bc8f7e"/>
    </g>
    <g filter="url(#b05)">
      <path d="M200 72 L180 100 M222 70 L200 108 M245 75 L220 112" stroke="#946658" stroke-width="1.2"/>
      <ellipse cx="122" cy="80" rx="6" ry="9" fill="#d6c2b8"/>
      <ellipse cx="181" cy="99" rx="3.5" ry="5" fill="#d3bbb0"/><ellipse cx="198" cy="105" rx="3.5" ry="5" fill="#d3bbb0"/><ellipse cx="218" cy="110" rx="3.5" ry="5" fill="#d3bbb0"/><ellipse cx="258" cy="116" rx="4" ry="5" fill="#c49a8a"/>
    </g>
    <path d="M103 8 L141 118" stroke="#141b20" stroke-width="4.5" fill="none"/>
    <path d="M102 7 L109 26" stroke="#b98c72" stroke-width="4.8" fill="none"/>
    <path d="M108 25 L118 52" stroke="#a98d72" stroke-width="1.5" fill="none"/>
    <path d="M134 100 L141 120" stroke="#b8c4c4" stroke-width="3" fill="none"/>
    <path d="M141 120 L180 150" stroke="#9fb0ac" stroke-width=".5" fill="none"/>
    <g fill="#b5c3c0" filter="url(#b1)">
      <rect x="108" y="116" width="35" height="10" opacity=".7"/><rect x="270" y="125" width="60" height="9" opacity=".6"/><rect x="225" y="127" width="40" height="6" opacity=".5"/><rect x="290" y="146" width="70" height="4" opacity=".5"/>
    </g>
  </svg></div>
  <div class="st">Not Started</div><div class="df adv">Advanced</div>
  <div class="t">Compliance and Data Privacy</div>
  <div class="c" style="letter-spacing:.3px">COMPLIANCE</div>
  <div class="d"><span style="letter-spacing:-.2px">Understanding GDPR, CCPA, and handling</span><br>sensitive customer information.</div>
  <div class="tags"><span style="letter-spacing:.1px">compliance</span><span style="letter-spacing:-.4px">GDPR</span><span style="letter-spacing:0">privacy</span><span style="letter-spacing:0">legal</span></div>
  <div class="meta"><div><svg width="16" height="16" fill="#6b7280"><use href="#i-clock"/></svg>45</div><div><svg width="16" height="16" fill="#6b7280"><use href="#i-people"/></svg>892 completed</div><div><svg width="16" height="16" fill="#6b7280"><use href="#i-star"/></svg>78% avg</div></div>
  <div class="hr"></div>
  <div class="h">Learning Objectives:</div>
  <ul class="obj"><li>Identify PII data</li><li>Follow data handling procedures</li><li>Recognize compliance violations</li></ul>
  <div class="foot"><div class="btn"><svg width="18" height="18" fill="#fff"><use href="#i-play"/></svg><span>Start Scenario</span></div></div>
</article>

<!-- CARD 4 -->
<article class="card" style="left:1494px">
  <div class="img"><svg width="368" height="200" viewBox="0 0 369 200"><g filter="url(#b03)">
    <rect x="-3" y="-3" width="375" height="206" fill="#d8d8d8"/>
    <rect x="232" y="0" width="90" height="72" fill="#ededed"/>
    <rect x="50" y="0" width="40" height="38" fill="#c6c6c6" filter="url(#b2)"/>
    <rect x="208" y="0" width="6" height="70" fill="#a6a6a6" filter="url(#b1)"/>
    <rect x="214" y="0" width="18" height="70" fill="#f2f2f2" filter="url(#b1)"/>
    <rect x="-3" y="-3" width="32" height="206" fill="#8c8c8c" filter="url(#b1)"/>
    <path d="M29 0 L40 0 L44 21 L35 28 L30 36 L29 36Z" fill="#333"/>
    <path d="M29 38 L38 40 L34 52 L29 50" stroke="#3c3c3c" fill="none" stroke-width="1.3"/>
    <path d="M60 125 L276 118 L276 166 L118 190 L60 182Z" fill="#dcdcdc"/>
    <path d="M44 186 L118 190 L276 160 L279 170 L125 198 L44 196Z" fill="#9a9a9a"/>
    <rect x="44" y="194" width="145" height="6" fill="#b4b4b4"/>
    <path d="M56 83 L127 85 L108 146 L44 128Z" fill="#1c1c1c"/>
    <path d="M58 88 L125 90 L107 143 L47 125Z" fill="#e2e2e2"/>
    <path d="M45 128 L108 146 L109 151 L84 157 L70 150Z" fill="#a0a0a0"/>
    <g fill="#7a7a7a"><rect x="62" y="112" width="5" height="3"/><rect x="63" y="118" width="5" height="5"/><rect x="62" y="125" width="5" height="4"/></g>
    <path d="M140 70 L236 69 L240 126 L150 142Z" fill="#e0e0e0"/>
    <path d="M140 70 L236 69 L236.5 74 L140 75Z" fill="#161616"/>
    <rect x="198" y="86" width="12" height="8" fill="#5c5c5c"/><rect x="210" y="86" width="10" height="20" fill="#848484"/><rect x="190" y="90" width="5" height="10" fill="#aaa"/>
    <path d="M146 100 L152 146 L185 160 L188 155 L188 135 L150 122Z" fill="#b6b6b6"/>
    <path d="M150 135 L185 146 L185 158 L153 146Z" fill="#8a8a8a"/>
    <path d="M129 76 Q138 84 146 90 L147 70 L151 70 L153 78 L157 68 L160 82 L167 76 L169 88 L168 100 L176 122 L199 128 L196 132 L170 127 L160 112 L150 103 Q140 92 129 76Z" fill="#4a4a4a"/>
    <path d="M29 108 L45 112 Q65 125 82 170 L78 203 L29 203Z" fill="#7b7b7b"/>
    <path d="M29 125 L50 130 L56 172 L29 178Z" fill="#5c5c5c"/>
    <path d="M253 -3 L322 -3 L322 55 L300 68 L275 70 L263 55 L258 30Z" fill="#979797"/>
    <path d="M263 50 L285 50 L288 68 L270 70Z" fill="#555"/>
    <path d="M252 -3 L342 -3 L338 16 L322 15 L322 8 L256 8Z" fill="#141414"/>
    <path d="M258 108 L262 88 L286 76 L322 50 L372 56 L372 106 Z" fill="#3a3a3a"/>
    <rect x="321" y="50" width="51" height="30" fill="#050505"/>
    <path d="M321 80 L372 80 L372 100 L340 102 L325 96Z" fill="#b6b6b6"/>
    <path d="M171 128 L372 106 L372 126 L184 146Z" fill="#5e5e5e"/>
    <path d="M184 146 L372 126 L372 136 L189 160Z" fill="#262626"/>
    <path d="M189 160 L372 134 L372 203 L283 203 L266 153 L225 158 L205 172Z" fill="#080808"/>
    <rect x="296" y="150" width="2" height="53" fill="#2a2a2a"/>
    <path d="M190 182 L266 155 L278 166 L283 203 L185 203Z" fill="#3c3c3c"/>
    <rect x="118" y="178" width="5" height="25" fill="#e6e6e6"/>
    <path d="M30 203 L55 178 L47 203Z" fill="#474747"/>
  </g></svg></div>
  <div class="st">Not Started</div><div class="df int">Intermediate</div>
  <div class="t">Multi-Channel Communication</div>
  <div class="c">CUSTOMER SERVICE</div>
  <div class="d">Effective communication across chat, email, and<br>voice channels.</div>
  <div class="tags"><span>nexgilechannel</span><span>communication</span><span>chat</span><span style="letter-spacing:0">email</span></div>
  <div class="meta"><div><svg width="16" height="16" fill="#6b7280"><use href="#i-clock"/></svg>35</div><div><svg width="16" height="16" fill="#6b7280"><use href="#i-people"/></svg>1567 completed</div><div><svg width="16" height="16" fill="#6b7280"><use href="#i-star"/></svg>85% avg</div></div>
  <div class="hr"></div>
  <div class="h">Learning Objectives:</div>
  <ul class="obj"><li>Adapt tone for different channels</li><li>Manage simultaneous interactions</li><li>Maintain consistency across channels</li></ul>
  <div class="foot"><div class="btn"><svg width="18" height="18" fill="#fff"><use href="#i-play"/></svg><span>Start Scenario</span></div></div>
</article>
</div>
</body>
</html>
